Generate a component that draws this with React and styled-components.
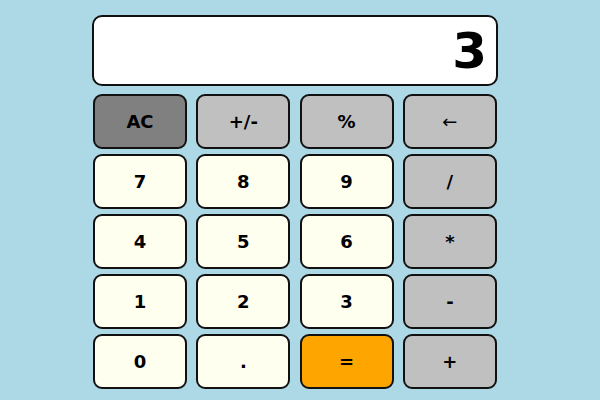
import styled, { createGlobalStyle } from "styled-components";

const GlobalStyle = createGlobalStyle`
  html, body {
    margin: 0;
    padding: 0;
    background: lightblue;
    font-family: "DejaVu Sans", Verdana, sans-serif;
  }
`;

const keys = [
  { label: "AC", kind: "clear" },
  { label: "+/-", kind: "op" },
  { label: "%", kind: "op" },
  { label: "←", kind: "op", thin: true },
  { label: "7" },
  { label: "8" },
  { label: "9" },
  { label: "/", kind: "op" },
  { label: "4" },
  { label: "5" },
  { label: "6" },
  { label: "*", kind: "op" },
  { label: "1" },
  { label: "2" },
  { label: "3" },
  { label: "-", kind: "op" },
  { label: "0" },
  { label: "." },
  { label: "=", kind: "equals" },
  { label: "+", kind: "op" },
];

const colors = {
  clear: "#808080",
  op: "#c0c0c0",
  equals: "#ffa500",
  num: "#fffff0",
};

export default function App() {
  return (
    <>
      <GlobalStyle />
      <Page>
        <Calculator>
          <Display>3</Display>
          <Keypad>
            {keys.map(({ label, kind, thin }) => (
              <Key key={label} $bg={colors[kind || "num"]} $thin={thin}>
                {label}
              </Key>
            ))}
          </Keypad>
        </Calculator>
      </Page>
    </>
  );
}

// styles
const Page = styled.div`
  width: 600px;
  height: 400px;
  padding: 15px 0 0 92px;
  box-sizing: border-box;
  overflow: hidden;
`;

const Calculator = styled.div`
  width: 406px;
  display: flex;
  flex-direction: column;
  align-items: flex-start;
  gap: 8px;
`;

const Display = styled.div`
  width: 406px;
  height: 71px;
  box-sizing: border-box;
  background: #ffffff;
  border: 2px solid #111;
  border-radius: 10px;
  display: flex;
  align-items: center;
  justify-content: flex-end;
  padding-right: 9px;
  font-size: 50px;
  font-weight: 700;
  color: #000;
`;

const Keypad = styled.div`
  display: grid;
  grid-template-columns: repeat(4, 94px);
  grid-auto-rows: 55px;
  column-gap: 9.3px;
  row-gap: 5px;
  margin-left: 1px;
`;

const Key = styled.button`
  box-sizing: border-box;
  background: ${(props) => props.$bg};
  border: 2px solid #111;
  border-radius: 9px;
  font-family: "DejaVu Sans", Verdana, sans-serif;
  font-size: 18px;
  font-weight: ${(props) => (props.$thin ? 400 : 700)};
  color: #000;
  padding: 0;
  display: flex;
  align-items: center;
  justify-content: center;
`;
